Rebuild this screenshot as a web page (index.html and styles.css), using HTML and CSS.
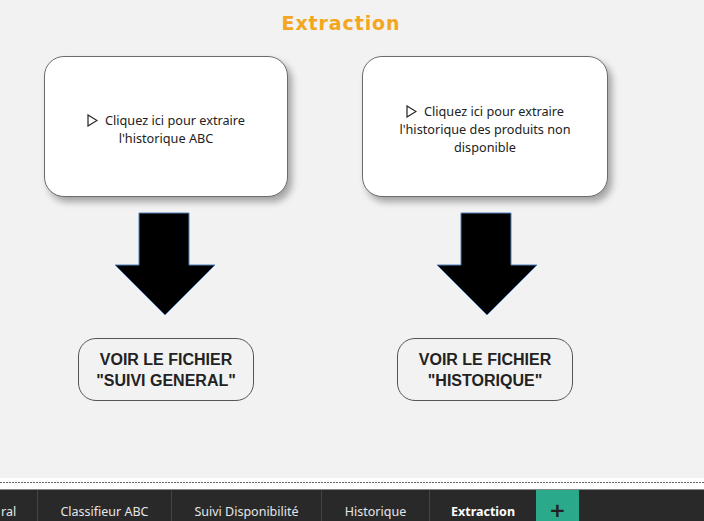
FILE: index.html
```html
<!DOCTYPE html>
<html lang="fr">
<head>
<meta charset="utf-8">
<title>Extraction</title>
<link rel="stylesheet" href="styles.css">
</head>
<body>
<div class="canvas">
  <header class="title">Extraction</header>
  <div class="columns">
    <section class="col col-a">
      <div class="card">
        <p class="card-text"><svg class="play" width="11" height="13" viewBox="0 0 11 13"><polygon points="1,1 10,6.5 1,12" fill="none" stroke="#222" stroke-width="1.2"/></svg>Cliquez ici pour extraire<br>l'historique ABC</p>
      </div>
      <svg class="arrow arrow-a" width="102" height="105" viewBox="0 0 102 105"><polygon points="25,1 75,1 75,53 101,53 51,103 1,53 25,53" fill="#000" stroke="#4f82bd" stroke-width="1"/></svg>
      <div class="file-btn">VOIR LE FICHIER<br>"SUIVI GENERAL"</div>
    </section>
    <section class="col col-b">
      <div class="card">
        <p class="card-text"><svg class="play" width="11" height="13" viewBox="0 0 11 13"><polygon points="1,1 10,6.5 1,12" fill="none" stroke="#222" stroke-width="1.2"/></svg>Cliquez ici pour extraire<br>l'historique des produits non<br>disponible</p>
      </div>
      <svg class="arrow arrow-b" width="102" height="105" viewBox="0 0 102 105"><polygon points="25,1 75,1 75,53 101,53 51,103 1,53 25,53" fill="#000" stroke="#4f82bd" stroke-width="1"/></svg>
      <div class="file-btn">VOIR LE FICHIER<br>"HISTORIQUE"</div>
    </section>
  </div>
</div>
<footer class="sheetbar">
  <div class="band"><div class="dots"></div></div>
  <nav class="tabs">
    <div class="tab tab-first">ral</div>
    <div class="tab tab-abc">Classifieur ABC</div>
    <div class="tab tab-dispo">Suivi Disponibilité</div>
    <div class="tab tab-hist">Historique</div>
    <div class="tab tab-active">Extraction</div>
    <div class="tab-add">+</div>
  </nav>
</footer>
</body>
</html>
```
FILE: styles.css
```css
html, body {
  margin: 0;
  padding: 0;
}
body {
  width: 704px;
  height: 521px;
  overflow: hidden;
  background: #f2f2f2;
  display: flex;
  flex-direction: column;
  font-family: "Noto Sans", "Open Sans", sans-serif;
}
.canvas {
  height: 478px;
  flex: none;
}
.title {
  height: 44px;
  display: flex;
  align-items: center;
  justify-content: center;
  padding-right: 22px;
  padding-top: 1px;
  box-sizing: border-box;
  font-family: "DejaVu Sans", sans-serif;
  font-weight: bold;
  font-size: 19px;
  letter-spacing: 0.9px;
  color: #f3a61e;
}
.columns {
  display: flex;
  gap: 74px;
  padding-left: 44px;
  padding-top: 12px;
}
.col {
  display: flex;
  flex-direction: column;
  align-items: center;
}
.col-a { width: 244px; }
.col-b { width: 246px; }
.card {
  width: 100%;
  height: 141px;
  box-sizing: border-box;
  border: 1px solid #6b6b6b;
  border-radius: 20px;
  background: #fff;
  box-shadow: 4px 5px 7px rgba(0, 0, 0, 0.33);
  display: flex;
  align-items: center;
  justify-content: center;
  padding-top: 5px;
}
.card-text {
  margin: 0;
  text-align: center;
  font-size: 12.7px;
  line-height: 18px;
  color: #222;
}
.play {
  vertical-align: -2px;
  margin-right: 7px;
}
.arrow {
  margin-top: 15px;
  display: block;
}
.arrow-a { margin-right: 2px; }
.arrow-b { margin-left: 3px; }
.file-btn {
  margin-top: 21px;
  width: 176px;
  height: 63px;
  box-sizing: border-box;
  border: 1px solid #555;
  border-radius: 18px;
  display: flex;
  align-items: center;
  justify-content: center;
  padding-top: 1px;
  text-align: center;
  font-family: "Liberation Sans", Arial, sans-serif;
  font-weight: bold;
  font-size: 16px;
  line-height: 21px;
  color: #222;
}
.sheetbar {
  flex: none;
  display: flex;
  flex-direction: column;
}
.band {
  height: 12px;
  background: #fff;
  padding-top: 4px;
  box-sizing: border-box;
  border-bottom: 1px solid #8a8a8a;
}
.dots {
  height: 1px;
  background-image: repeating-linear-gradient(to right, #666 0 2px, transparent 2px 3px);
}
.tabs {
  display: flex;
  height: 40px;
  background: #292929;
}
.tab {
  flex: none;
  display: flex;
  align-items: center;
  justify-content: center;
  box-sizing: border-box;
  padding-top: 2px;
  border-right: 1px solid #444;
  font-size: 12.5px;
  color: #e6e6e6;
  white-space: nowrap;
}
.tab-first {
  width: 38px;
  justify-content: flex-start;
  padding-left: 1px;
}
.tab-abc { width: 134px; }
.tab-dispo { width: 150px; }
.tab-hist { width: 108px; }
.tab-active {
  width: 106px;
  color: #fff;
  font-weight: bold;
  border-right: none;
}
.tab-add {
  flex: none;
  width: 43px;
  background: #2aa98b;
  display: flex;
  align-items: center;
  justify-content: center;
  font-family: "DejaVu Sans", sans-serif;
  font-weight: bold;
  font-size: 20px;
  color: #222;
}
```
